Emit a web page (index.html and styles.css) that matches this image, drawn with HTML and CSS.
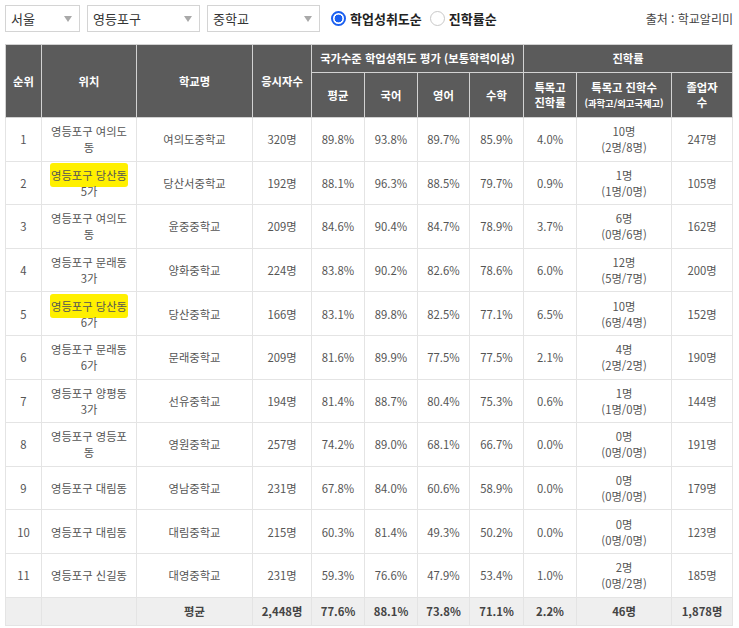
FILE: index.html
```html
<!DOCTYPE html>
<html lang="ko">
<head>
<meta charset="utf-8">
<link rel="stylesheet" href="styles.css">
</head>
<body>
<div class="toolbar">
  <div class="select s-city"><span>서울</span><i class="arrow"></i></div>
  <div class="select s-wide"><span>영등포구</span><i class="arrow"></i></div>
  <div class="select s-wide"><span>중학교</span><i class="arrow"></i></div>
  <label class="radio on"><i class="dot"></i><span>학업성취도순</span></label>
  <label class="radio"><i class="dot"></i><span>진학률순</span></label>
  <div class="source">출처 : 학교알리미</div>
</div>
<table class="grid">
  <colgroup>
    <col class="c-rank"><col class="c-loc"><col class="c-school"><col class="c-exam">
    <col class="c-score"><col class="c-score"><col class="c-score2"><col class="c-score3">
    <col class="c-score"><col class="c-count"><col class="c-grad">
  </colgroup>
  <thead>
    <tr class="h1">
      <th rowspan="2">순위</th>
      <th rowspan="2">위치</th>
      <th rowspan="2">학교명</th>
      <th rowspan="2">응시자수</th>
      <th colspan="4">국가수준 학업성취도 평가 (보통학력이상)</th>
      <th colspan="3">진학률</th>
    </tr>
    <tr class="h2">
      <th>평균</th><th>국어</th><th>영어</th><th>수학</th>
      <th>특목고<br>진학률</th>
      <th>특목고 진학수<br><span class="sub">(과학고/외고국제고)</span></th>
      <th>졸업자<br>수</th>
    </tr>
  </thead>
  <tbody>
    <tr><td>1</td><td class="loc">영등포구 여의도동</td><td>여의도중학교</td><td>320명</td><td>89.8%</td><td>93.8%</td><td>89.7%</td><td>85.9%</td><td>4.0%</td><td>10명<br>(2명/8명)</td><td>247명</td></tr>
    <tr><td>2</td><td class="loc"><span class="mark">영등포구 당산동</span> 5가</td><td>당산서중학교</td><td>192명</td><td>88.1%</td><td>96.3%</td><td>88.5%</td><td>79.7%</td><td>0.9%</td><td>1명<br>(1명/0명)</td><td>105명</td></tr>
    <tr><td>3</td><td class="loc">영등포구 여의도동</td><td>윤중중학교</td><td>209명</td><td>84.6%</td><td>90.4%</td><td>84.7%</td><td>78.9%</td><td>3.7%</td><td>6명<br>(0명/6명)</td><td>162명</td></tr>
    <tr><td>4</td><td class="loc">영등포구 문래동 3가</td><td>양화중학교</td><td>224명</td><td>83.8%</td><td>90.2%</td><td>82.6%</td><td>78.6%</td><td>6.0%</td><td>12명<br>(5명/7명)</td><td>200명</td></tr>
    <tr><td>5</td><td class="loc"><span class="mark">영등포구 당산동</span> 6가</td><td>당산중학교</td><td>166명</td><td>83.1%</td><td>89.8%</td><td>82.5%</td><td>77.1%</td><td>6.5%</td><td>10명<br>(6명/4명)</td><td>152명</td></tr>
    <tr><td>6</td><td class="loc">영등포구 문래동 6가</td><td>문래중학교</td><td>209명</td><td>81.6%</td><td>89.9%</td><td>77.5%</td><td>77.5%</td><td>2.1%</td><td>4명<br>(2명/2명)</td><td>190명</td></tr>
    <tr><td>7</td><td class="loc">영등포구 양평동 3가</td><td>선유중학교</td><td>194명</td><td>81.4%</td><td>88.7%</td><td>80.4%</td><td>75.3%</td><td>0.6%</td><td>1명<br>(1명/0명)</td><td>144명</td></tr>
    <tr><td>8</td><td class="loc">영등포구 영등포동</td><td>영원중학교</td><td>257명</td><td>74.2%</td><td>89.0%</td><td>68.1%</td><td>66.7%</td><td>0.0%</td><td>0명<br>(0명/0명)</td><td>191명</td></tr>
    <tr><td>9</td><td class="loc">영등포구 대림동</td><td>영남중학교</td><td>231명</td><td>67.8%</td><td>84.0%</td><td>60.6%</td><td>58.9%</td><td>0.0%</td><td>0명<br>(0명/0명)</td><td>179명</td></tr>
    <tr><td>10</td><td class="loc">영등포구 대림동</td><td>대림중학교</td><td>215명</td><td>60.3%</td><td>81.4%</td><td>49.3%</td><td>50.2%</td><td>0.0%</td><td>0명<br>(0명/0명)</td><td>123명</td></tr>
    <tr><td>11</td><td class="loc">영등포구 신길동</td><td>대영중학교</td><td>231명</td><td>59.3%</td><td>76.6%</td><td>47.9%</td><td>53.4%</td><td>1.0%</td><td>2명<br>(0명/2명)</td><td>185명</td></tr>
  </tbody>
  <tfoot>
    <tr><td></td><td></td><td>평균</td><td>2,448명</td><td>77.6%</td><td>88.1%</td><td>73.8%</td><td>71.1%</td><td>2.2%</td><td>46명</td><td>1,878명</td></tr>
  </tfoot>
</table>
</body>
</html>
```
FILE: styles.css
```css
html, body {
  margin: 0;
  background: #fff;
}
body {
  padding: 5px 6px 0 5px;
  font-family: "Noto Sans CJK KR", "Noto Sans", sans-serif;
  color: #555;
}
.toolbar {
  display: flex;
  align-items: center;
  height: 27px;
  gap: 7px;
}
.select {
  box-sizing: border-box;
  height: 27px;
  border: 1px solid #d4d4d4;
  display: flex;
  align-items: center;
  justify-content: space-between;
  padding: 0 7px 0 5px;
  font-size: 13px;
  color: #333;
}
.s-city { width: 75px; }
.s-wide { width: 113px; }
.arrow {
  width: 0;
  height: 0;
  border-left: 4px solid transparent;
  border-right: 4px solid transparent;
  border-top: 6px solid #a9a9a9;
}
.radio {
  display: flex;
  align-items: center;
  gap: 4px;
  font-size: 13px;
  font-weight: bold;
  color: #222;
}
.radio.on { margin-left: 4px; }
.radio + .radio { margin-left: 1px; }
.dot {
  box-sizing: border-box;
  width: 15px;
  height: 15px;
  border-radius: 50%;
  border: 1px solid #c8c8c8;
  background: #fff;
}
.radio.on .dot {
  border: 2px solid #1a5ff0;
  background: radial-gradient(circle, #1a5ff0 0 3.6px, #fff 4.2px);
}
.source {
  margin-left: auto;
  font-size: 12px;
  color: #444;
}
.grid {
  margin-top: 12px;
  width: 728px;
  border-collapse: collapse;
  table-layout: fixed;
  font-size: 11.3px;
  text-align: center;
}
.c-rank { width: 36px; }
.c-loc { width: 95px; }
.c-school { width: 116px; }
.c-exam { width: 59px; }
.c-score { width: 53px; }
.c-score2 { width: 52px; }
.c-score3 { width: 54px; }
.c-count { width: 95px; }
.c-grad { width: 61px; }
.grid th {
  background: #5b5b5b;
  color: #fff;
  font-weight: bold;
  border: 1px solid #d2d2d2;
  font-size: 11.3px;
  line-height: 15px;
  padding: 0;
}
.grid .h1 { height: 28px; }
.grid .h2 { height: 45px; }
.grid .sub { font-size: 9.3px; }
.grid td {
  border: 1px solid #e4e4e4;
  line-height: 16px;
  padding: 0 2px;
  color: #555;
}
.grid tbody tr { height: 43.6px; }
.grid td.loc { padding: 0 5px; }
.mark {
  background: #fff000;
  padding: 4px 1px;
  border-radius: 3px;
  box-decoration-break: clone;
}
.grid tfoot tr { height: 28px; }
.grid tfoot td {
  background: #efefef;
  font-weight: bold;
  color: #444;
}
```
